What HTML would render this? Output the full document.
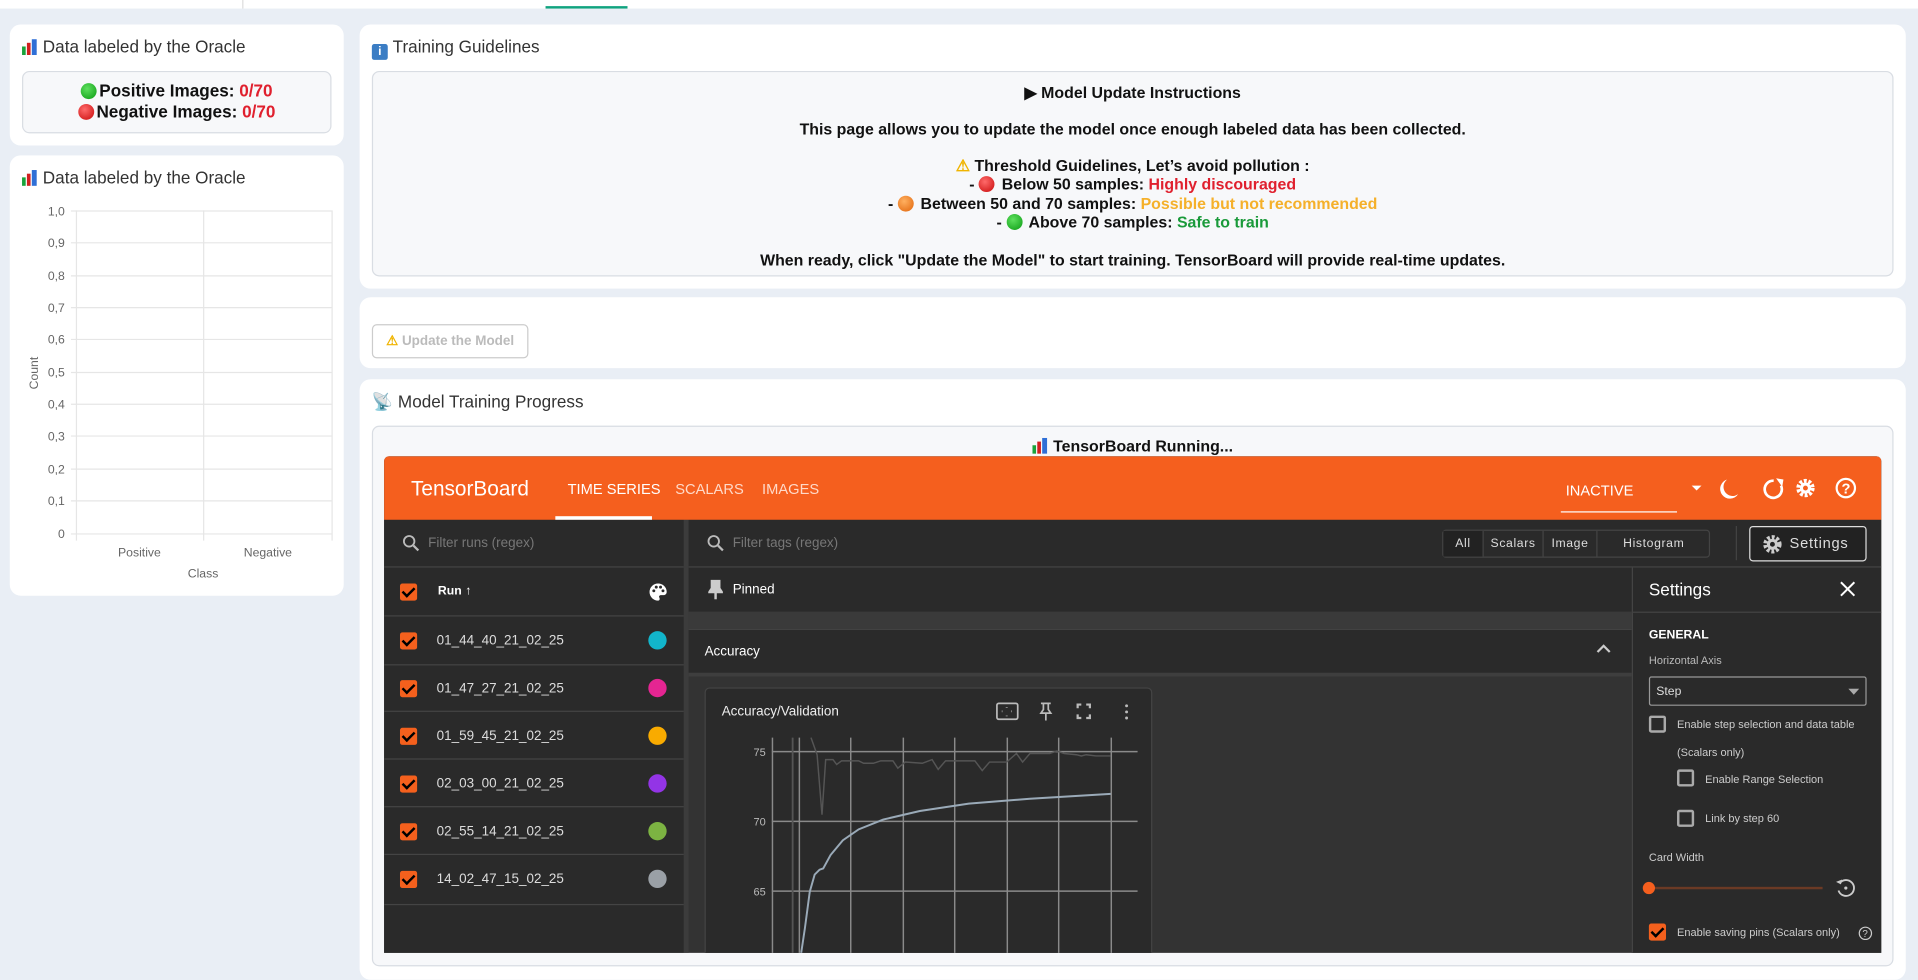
<!DOCTYPE html>
<html><head><meta charset="utf-8"><style>
*{box-sizing:border-box;margin:0;padding:0}
html,body{width:1918px;height:980px;overflow:hidden;background:#e9eef5}
#w{position:absolute;left:0;top:0;width:1568px;height:801px;transform:scale(1.22321);transform-origin:0 0;font-family:"Liberation Sans",sans-serif;color:#222}
.a{position:absolute}
.card{position:absolute;background:#fff;border-radius:9px}
.t{position:absolute;font-size:14px;color:#333;white-space:nowrap}
.box{position:absolute;background:#f7f8fa;border:1px solid #d9dde3;border-radius:6px}
.c{display:inline-block;width:13px;height:13px;border-radius:50%;vertical-align:-2px;margin-right:2px}
.g{background:radial-gradient(circle at 40% 35%,#5ee05e,#0a9a12)}
.r{background:radial-gradient(circle at 40% 35%,#ff6a6a,#c80a0a)}
.o{background:radial-gradient(circle at 40% 35%,#ffb060,#e0640a)}
.ic{display:inline-block;width:13px;height:13px;vertical-align:-2px;margin-right:4px}
.ctr{position:absolute;left:0;right:0;text-align:center;font-weight:bold;font-size:13px;color:#111;white-space:nowrap}
.dk{color:#ddd;font-size:11px}
.cb{position:absolute;width:14px;height:14px;background:#f4601d;border-radius:2px}
.cb:after{content:"";position:absolute;left:4px;top:1px;width:4px;height:8px;border:solid #000;border-width:0 2px 2px 0;transform:rotate(45deg)}
.ecb{position:absolute;width:14px;height:14px;border:2px solid #aaa;border-radius:2px}
.row{position:absolute;left:0;width:245px;height:40px;border-bottom:1px solid #444}
.dot{position:absolute;width:15px;height:15px;border-radius:50%;left:216px;top:12px}
</style></head><body><div id="w">
<div class="a" style="left:0;top:0;width:1568px;height:7px;background:#fff"></div>
<div class="a" style="left:198px;top:0;width:1px;height:7px;background:#ddd"></div>
<div class="a" style="left:446px;top:5px;width:67px;height:2px;background:#10a37f"></div>

<div class="card" style="left:8px;top:20px;width:273px;height:99px">
<div class="t" style="left:10px;top:10px"><svg class="ic" viewBox="0 0 13 13"><rect x="0" y="6" width="3" height="7" fill="#19a33b"/><rect x="4" y="3" width="3" height="10" fill="#d21f1f"/><rect x="8" y="0" width="4" height="13" fill="#2f6fd6"/></svg>Data labeled by the Oracle</div>
<div class="box" style="left:10px;top:38px;width:253px;height:51px">
<div class="ctr" style="top:7px;font-size:14px"><span class="c g"></span>Positive Images: <span style="color:#e0202e">0/70</span></div>
<div class="ctr" style="top:24px;font-size:14px"><span class="c r"></span>Negative Images: <span style="color:#e0202e">0/70</span></div>
</div></div>

<div class="card" style="left:8px;top:127px;width:273px;height:360px">
<div class="t" style="left:10px;top:10px"><svg class="ic" viewBox="0 0 13 13"><rect x="0" y="6" width="3" height="7" fill="#19a33b"/><rect x="4" y="3" width="3" height="10" fill="#d21f1f"/><rect x="8" y="0" width="4" height="13" fill="#2f6fd6"/></svg>Data labeled by the Oracle</div>
<svg class="a" style="left:0;top:0" width="273" height="360">
<g stroke="#e6e6e6" stroke-width="1">
<line x1="50" x2="263" y1="45.5" y2="45.5"/><line x1="50" x2="263" y1="71.5" y2="71.5"/><line x1="50" x2="263" y1="98.5" y2="98.5"/><line x1="50" x2="263" y1="124.5" y2="124.5"/><line x1="50" x2="263" y1="150.5" y2="150.5"/><line x1="50" x2="263" y1="177.5" y2="177.5"/><line x1="50" x2="263" y1="203.5" y2="203.5"/><line x1="50" x2="263" y1="229.5" y2="229.5"/><line x1="50" x2="263" y1="256.5" y2="256.5"/><line x1="50" x2="263" y1="282.5" y2="282.5"/><line x1="50" x2="263" y1="309.5" y2="309.5"/>
<line x1="54.5" x2="54.5" y1="45" y2="315"/><line x1="158.5" x2="158.5" y1="45" y2="315"/><line x1="263.5" x2="263.5" y1="45" y2="315"/>
</g>
<g font-family="Liberation Sans" font-size="10" fill="#666" text-anchor="end">
<text x="45" y="49">1,0</text><text x="45" y="75">0,9</text><text x="45" y="102">0,8</text><text x="45" y="128">0,7</text><text x="45" y="154">0,6</text><text x="45" y="181">0,5</text><text x="45" y="207">0,4</text><text x="45" y="233">0,3</text><text x="45" y="260">0,2</text><text x="45" y="286">0,1</text><text x="45" y="313">0</text>
</g>
<g font-family="Liberation Sans" font-size="10" fill="#666" text-anchor="middle">
<text x="106" y="328">Positive</text><text x="211" y="328">Negative</text><text x="158" y="345">Class</text>
<text transform="translate(23,178) rotate(-90)">Count</text></g>
</svg></div>

<div class="card" style="left:294px;top:20px;width:1264px;height:216px">
<div class="t" style="left:10px;top:10px"><span class="ic" style="background:#3b7dc4;border-radius:2px;color:#fff;font-size:10px;text-align:center;line-height:13px;font-weight:bold">i</span>Training Guidelines</div>
<div class="box" style="left:10px;top:38px;width:1244px;height:168px">
<div class="ctr" style="top:9px">&#9654; Model Update Instructions</div>
<div class="ctr" style="top:39px">This page allows you to update the model once enough labeled data has been collected.</div>
<div class="ctr" style="top:69px"><span style="color:#f0b400">&#9888;</span> Threshold Guidelines, Let’s avoid pollution :</div>
<div class="ctr" style="top:84px">- <span class="c r"></span> Below 50 samples: <span style="color:#e0202e">Highly discouraged</span></div>
<div class="ctr" style="top:100px">- <span class="c o"></span> Between 50 and 70 samples: <span style="color:#f5b02a">Possible but not recommended</span></div>
<div class="ctr" style="top:115px">- <span class="c g"></span> Above 70 samples: <span style="color:#1a9a3a">Safe to train</span></div>
<div class="ctr" style="top:146px">When ready, click "Update the Model" to start training. TensorBoard will provide real-time updates.</div>
</div></div>

<div class="card" style="left:294px;top:243px;width:1264px;height:58px">
<div class="a" style="left:10px;top:22px;width:128px;height:28px;border:1px solid #ccc;border-radius:4px;font-size:11px;font-weight:bold;color:#bbb;text-align:center;line-height:26px"><span style="color:#f0b400">&#9888;</span> Update the Model</div>
</div>

<div class="card" style="left:294px;top:310px;width:1264px;height:491px">
<div class="t" style="left:10px;top:10px">&#128225; Model Training Progress</div>
<div class="box" style="left:10px;top:38px;width:1244px;height:442px">
<div class="ctr" style="top:8px"><svg class="ic" viewBox="0 0 13 13"><rect x="0" y="6" width="3" height="7" fill="#19a33b"/><rect x="4" y="3" width="3" height="10" fill="#d21f1f"/><rect x="8" y="0" width="4" height="13" fill="#2f6fd6"/></svg>TensorBoard Running...</div>
</div></div>

<div class="a" style="left:314px;top:373px;width:1224px;height:406px;background:#333;border-radius:4px 4px 0 0;overflow:hidden">
<div class="a" style="left:0;top:0;width:1224px;height:52px;background:#f55f1e"></div>
<div class="a" style="left:22px;top:17px;color:#fff;font-size:17px">TensorBoard</div>
<div class="a" style="left:150px;top:20px;color:#fff;font-size:12px">TIME SERIES</div>
<div class="a" style="left:238px;top:20px;color:#ffd9c8;font-size:12px">SCALARS</div>
<div class="a" style="left:309px;top:20px;color:#ffd9c8;font-size:12px">IMAGES</div>
<div class="a" style="left:140px;top:49px;width:79px;height:3px;background:#fff"></div>
<div class="a" style="left:966px;top:21px;color:#fff;font-size:12px">INACTIVE</div>
<div class="a" style="left:962px;top:45px;width:95px;height:1px;background:#fff"></div>
<svg class="a" style="left:1068px;top:16px" width="150" height="22" fill="#fff">
<path d="M1 8h8l-4 4z"/>
<path d="M30 3a8 8 0 1 0 9 12a7 7 0 0 1-9-12z"/>
<path d="M68 4a7 7 0 1 0 6 4" stroke="#fff" stroke-width="2.2" fill="none"/><path d="M70 2l6 1-1 6z"/>
<circle cx="94" cy="10" r="5.5" fill="none" stroke="#fff" stroke-width="4" stroke-dasharray="2.2 1.3"/><circle cx="94" cy="10" r="4.5"/><circle cx="94" cy="10" r="2" fill="#f55f1e"/>
<circle cx="127" cy="10" r="7.5" fill="none" stroke="#fff" stroke-width="1.8"/>
<text x="123.5" y="14.5" font-size="12" font-weight="bold" font-family="Liberation Sans">?</text>
</svg>
<div class="a" style="left:0;top:52px;width:245px;height:354px;background:#2a2a2a">
<div class="row" style="top:0;height:39px"><svg class="a" style="left:15px;top:12px" width="14" height="14"><circle cx="5.5" cy="5.5" r="4.3" fill="none" stroke="#bbb" stroke-width="1.5"/><path d="M9 9l4 4" stroke="#bbb" stroke-width="1.8"/></svg><span class="a" style="left:36px;top:13px;font-size:11px;color:#777">Filter runs (regex)</span></div>
<div class="row" style="top:39px"><div class="cb" style="left:13px;top:13px"></div><span class="a" style="left:44px;top:14px;font-size:10px;color:#fff;font-weight:bold">Run ↑</span><svg class="a" style="left:216px;top:12px" width="16" height="16"><path d="M8 1a7 7 0 0 0 0 14c1.5 0 1.5-1.5 1-2.5s0-2 1.5-2H13a2.5 2.5 0 0 0 2-3A7 7 0 0 0 8 1z" fill="#fff"/><circle cx="4.5" cy="7" r="1.2" fill="#2a2a2a"/><circle cx="6.5" cy="4" r="1.2" fill="#2a2a2a"/><circle cx="10" cy="4" r="1.2" fill="#2a2a2a"/><circle cx="12" cy="7" r="1.2" fill="#2a2a2a"/></svg></div>
<div class="row" style="top:79px"><div class="cb" style="left:13px;top:13px"></div><span class="a dk" style="left:43px;top:14px">01_44_40_21_02_25</span><div class="dot" style="background:#12b5cb"></div></div>
<div class="row" style="top:118px;height:39px"><div class="cb" style="left:13px;top:13px"></div><span class="a dk" style="left:43px;top:14px">01_47_27_21_02_25</span><div class="dot" style="background:#e52592"></div></div>
<div class="row" style="top:157px;height:39px"><div class="cb" style="left:13px;top:13px"></div><span class="a dk" style="left:43px;top:14px">01_59_45_21_02_25</span><div class="dot" style="background:#f9ab00"></div></div>
<div class="row" style="top:196px;height:39px"><div class="cb" style="left:13px;top:13px"></div><span class="a dk" style="left:43px;top:14px">02_03_00_21_02_25</span><div class="dot" style="background:#9334e6"></div></div>
<div class="row" style="top:235px;height:39px"><div class="cb" style="left:13px;top:13px"></div><span class="a dk" style="left:43px;top:14px">02_55_14_21_02_25</span><div class="dot" style="background:#7cb342"></div></div>
<div class="row" style="top:274px;height:41px"><div class="cb" style="left:13px;top:13px"></div><span class="a dk" style="left:43px;top:14px">14_02_47_15_02_25</span><div class="dot" style="background:#9aa0a6"></div></div>
</div>
<div class="a" style="left:245px;top:52px;width:4px;height:354px;background:#3c3c3c"></div>
<div class="a" style="left:249px;top:52px;width:975px;height:39px;background:#2a2a2a;border-bottom:1px solid #444">
<svg class="a" style="left:15px;top:12px" width="14" height="14"><circle cx="5.5" cy="5.5" r="4.3" fill="none" stroke="#bbb" stroke-width="1.5"/><path d="M9 9l4 4" stroke="#bbb" stroke-width="1.8"/></svg>
<span class="a" style="left:36px;top:13px;font-size:11px;color:#777">Filter tags (regex)</span>
<div class="a" style="left:616px;top:8px;width:219px;height:23px;border:1px solid #444;border-radius:3px;font-size:10px;color:#ddd;letter-spacing:.5px">
<span class="a" style="left:0;top:0;width:33px;height:21px;background:#222;text-align:center;line-height:21px;border-right:1px solid #444">All</span>
<span class="a" style="left:33px;top:0;width:49px;height:21px;text-align:center;line-height:21px;border-right:1px solid #444">Scalars</span>
<span class="a" style="left:82px;top:0;width:44px;height:21px;text-align:center;line-height:21px;border-right:1px solid #444">Image</span>
<span class="a" style="left:126px;top:0;width:92px;height:21px;text-align:center;line-height:21px">Histogram</span></div>
<div class="a" style="left:856px;top:5px;width:1px;height:28px;background:#444"></div>
<div class="a" style="left:867px;top:5px;width:96px;height:29px;border:1px solid #ddd;border-radius:3px;background:#222;color:#ddd;font-size:12px;line-height:27px;letter-spacing:.6px;padding-left:32px">Settings
<svg class="a" style="left:10px;top:6px" width="16" height="16"><circle cx="8" cy="8" r="5.5" fill="none" stroke="#ccc" stroke-width="4" stroke-dasharray="2.2 1.4"/><circle cx="8" cy="8" r="4.5" fill="#ccc"/><circle cx="8" cy="8" r="2" fill="#222"/></svg></div>
</div>
<div class="a" style="left:249px;top:91px;width:771px;height:36px;background:#2a2a2a">
<svg class="a" style="left:16px;top:10px" width="12" height="16"><path d="M2 1h8M3 1v6l-2 3h10l-2-3V1M6 10v6" stroke="#ccc" stroke-width="2" fill="#ccc"/></svg>
<span class="a" style="left:36px;top:12px;font-size:11px;color:#fff">Pinned</span></div>
<div class="a" style="left:249px;top:127px;width:771px;height:14px;background:#3a3a3a"></div>
<div class="a" style="left:249px;top:141px;width:771px;height:36px;background:#2a2a2a;border-top:1px solid #444">
<span class="a" style="left:13px;top:12px;font-size:11px;color:#fff">Accuracy</span>
<svg class="a" style="left:742px;top:11px" width="12" height="10"><path d="M1 7l5-5 5 5" stroke="#ccc" stroke-width="1.8" fill="none"/></svg></div>
<div class="a" style="left:249px;top:177px;width:771px;height:3px;background:#3e3e3e"></div>
<div class="a" style="left:262px;top:189px;width:366px;height:230px;background:#2a2a2a;border:1px solid #444;border-radius:4px">
<span class="a" style="left:13px;top:13px;font-size:11px;color:#eee">Accuracy/Validation</span>
<svg class="a" style="left:237px;top:11px" width="120" height="16" fill="none" stroke="#bbb" stroke-width="1.4">
<rect x="1" y="1" width="17" height="13" rx="1.5"/><path d="M9 4v0.5M9 11v0.5M5 7.5h0.5M12.5 7.5h0.5" stroke-width="1.6"/>
<path d="M37 1h8M39 1v5l-2 3h8l-2-3V1M41 9v6"/>
<path d="M67 5V2h3M74 2h3v3M77 10v3h-3M70 13h-3v-3" stroke-width="1.8"/>
<circle cx="107" cy="3" r="1.2" fill="#bbb" stroke="none"/><circle cx="107" cy="8" r="1.2" fill="#bbb" stroke="none"/><circle cx="107" cy="13" r="1.2" fill="#bbb" stroke="none"/>
</svg>
<svg class="a" style="left:0;top:0" width="366" height="230">
<g stroke="#8a8a8a" stroke-width="1.2">
<line x1="54" x2="353" y1="51.5" y2="51.5"/><line x1="54" x2="353" y1="108.5" y2="108.5"/><line x1="54" x2="353" y1="165.5" y2="165.5"/>
<line x1="54.5" x2="54.5" y1="40" y2="230"/><line x1="76.5" x2="76.5" y1="40" y2="230"/><line x1="118.5" x2="118.5" y1="40" y2="230"/><line x1="161.5" x2="161.5" y1="40" y2="230"/><line x1="203.5" x2="203.5" y1="40" y2="230"/><line x1="246.5" x2="246.5" y1="40" y2="230"/><line x1="288.5" x2="288.5" y1="40" y2="230"/><line x1="331.5" x2="331.5" y1="40" y2="230"/>
</g>
<g font-family="Liberation Sans" font-size="9" fill="#bbb" text-anchor="end"><text x="49" y="55">75</text><text x="49" y="112">70</text><text x="49" y="169">65</text></g>
<path d="M71 40V230" stroke="#555" stroke-width="1.5"/>
<path d="M86 40l5 14 4 49 3-45 6 0 3 4 4-3 14 0 4 2 8 0 6-2 10 0 4 6 6-5 14 1 8-3 5 8 6-7 12 0 12 0 6 8 6-7 14 0 8-7 5 7 6-7 16 0 6-2 6 2 10 1 4 1 4-1 8 1 12 0" stroke="#555" stroke-width="1.2" fill="none"/>
<path d="M78 216l3-20 4-30 4-14 4-4 3-1 6-11 10-12 13-9 20-8 30-7 40-6 50-4 66-4" stroke="#9aaab8" stroke-width="1.6" fill="none"/>
</svg></div>
<div class="a" style="left:1020px;top:91px;width:204px;height:315px;background:#2a2a2a;border-left:1px solid #444">
<span class="a" style="left:13px;top:10px;font-size:14px;color:#fff">Settings</span>
<svg class="a" style="left:169px;top:11px" width="13" height="13"><path d="M1 1l11 11M12 1L1 12" stroke="#fff" stroke-width="1.6"/></svg>
<div class="a" style="left:0;top:36px;width:204px;height:1px;background:#444"></div>
<span class="a" style="left:13px;top:50px;font-size:10px;color:#fff;font-weight:bold">GENERAL</span>
<span class="a" style="left:13px;top:71px;font-size:9px;color:#bbb">Horizontal Axis</span>
<div class="a" style="left:13px;top:89px;width:178px;height:24px;border:1px solid #999;border-radius:2px"><span class="a" style="left:5px;top:6px;font-size:10px;color:#ddd">Step</span><svg class="a" style="left:162px;top:9px" width="9" height="6"><path d="M0 0h9L4.5 5z" fill="#aaa"/></svg></div>
<div class="ecb" style="left:13px;top:121px"></div>
<span class="a" style="left:36px;top:123px;font-size:9px;color:#ccc">Enable step selection and data table</span>
<span class="a" style="left:36px;top:146px;font-size:9px;color:#ccc">(Scalars only)</span>
<div class="ecb" style="left:36px;top:165px"></div>
<span class="a" style="left:59px;top:168px;font-size:9px;color:#ccc">Enable Range Selection</span>
<div class="ecb" style="left:36px;top:198px"></div>
<span class="a" style="left:59px;top:200px;font-size:9px;color:#ccc">Link by step 60</span>
<span class="a" style="left:13px;top:232px;font-size:9px;color:#ccc">Card Width</span>
<div class="a" style="left:13px;top:261px;width:142px;height:2px;background:#6b3a25"></div>
<div class="a" style="left:8px;top:257px;width:10px;height:10px;border-radius:50%;background:#f55f1e"></div>
<svg class="a" style="left:164px;top:252px" width="20" height="20"><path d="M5 6a6.5 6.5 0 1 1-1 6" stroke="#ccc" stroke-width="1.5" fill="none"/><path d="M2 5l4 2 1-4z" fill="#ccc"/><circle cx="10" cy="10" r="1.3" fill="#ccc"/></svg>
<div class="cb" style="left:13px;top:291px"></div>
<span class="a" style="left:36px;top:293px;font-size:9px;color:#ccc">Enable saving pins (Scalars only)</span>
<svg class="a" style="left:184px;top:293px" width="12" height="12"><circle cx="6" cy="6" r="5" fill="none" stroke="#ccc"/><text x="3.5" y="9" font-size="8" fill="#ccc" font-family="Liberation Sans">?</text></svg>
</div>
</div>
</div></body></html>
